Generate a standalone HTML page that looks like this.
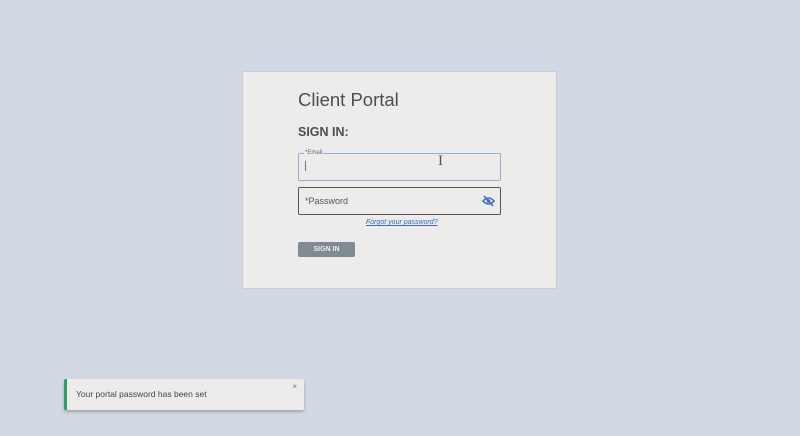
<!DOCTYPE html>
<html><head><style>
*{margin:0;padding:0;box-sizing:border-box}
body{width:800px;height:436px;background:#d3d9e4;font-family:"Liberation Sans",sans-serif;position:relative;overflow:hidden}
.card{position:absolute;left:242px;top:71px;width:315px;height:218px;background:#edecea;border:1px solid #c9ccd2;border-radius:2px}
.t{position:absolute;left:298px;top:89px;font-size:18.5px;color:#4a4f55}
.s{position:absolute;left:298px;top:125px;font-size:12.5px;font-weight:bold;color:#4a4f55}
.e{position:absolute;left:298px;top:153px;width:203px;height:28px;border:1px solid #8fb0dc;border-radius:2px}
.el{position:absolute;left:304px;top:150px;font-size:6px;color:#666;background:#edecea;padding:0 1px}
.cur{position:absolute;left:305px;top:161px;width:1px;height:10px;background:#777}
.ib{position:absolute;left:438px;top:153px;font-size:15px;color:#555;font-family:"Liberation Serif",serif}
.p{position:absolute;left:298px;top:187px;width:203px;height:28px;border:1px solid #555;border-radius:2px}
.pl{position:absolute;left:305px;top:196px;font-size:9px;color:#555}
.f{position:absolute;left:366px;top:219px;font-size:7px;color:#3a6cc0;text-decoration:underline;font-style:italic}
.b{position:absolute;left:298px;top:242px;width:57px;height:15px;background:#7f8b93;border-radius:2px;color:#eee;font-size:7px;font-weight:bold;text-align:center;line-height:16px}
.toast{position:absolute;left:64px;top:379px;width:240px;height:31px;background:#edecea;border-left:3px solid #2f9c6a;border-radius:2px;box-shadow:0 2px 3px rgba(0,0,0,.25)}
.toast span{position:absolute;left:9px;top:10px;font-size:8.5px;color:#444}
.toast i{position:absolute;right:7px;top:3px;font-size:8px;color:#777;font-style:normal}
</style></head><body>
<div class="card"></div>
<div class="t">Client Portal</div>
<div class="s">SIGN IN:</div>
<div class="e"></div><div class="el">*Email</div><div class="cur"></div><div class="ib">I</div>
<div class="p"></div><div class="pl">*Password</div>
<svg style="position:absolute;left:482px;top:195px" width="13" height="12" viewBox="0 0 13 12"><path d="M1 6Q6.5 0 12 6Q6.5 12 1 6Z" fill="none" stroke="#3a6cc0" stroke-width="1.6"/><circle cx="6.5" cy="6" r="1.8" fill="#3a6cc0"/><path d="M2 1L11 11" stroke="#3a6cc0" stroke-width="1.6"/></svg>
<div class="f">Forgot your password?</div>
<div class="b">SIGN IN</div>
<div class="toast"><span>Your portal password has been set</span><i>×</i></div>
</body></html>
